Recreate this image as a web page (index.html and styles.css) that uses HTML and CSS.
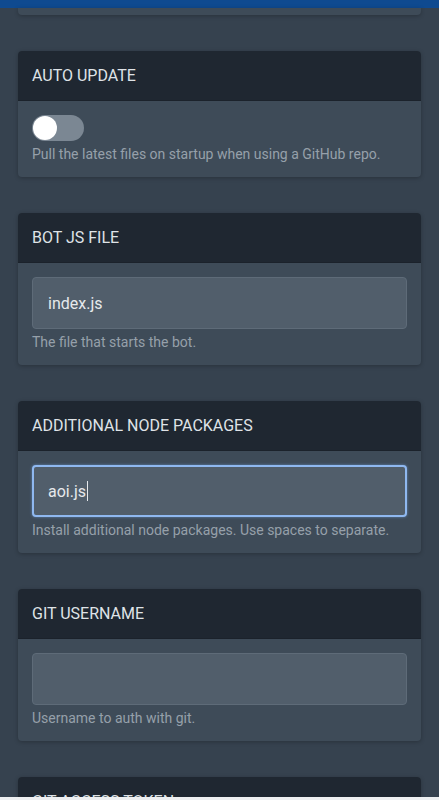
FILE: index.html
```html
<!DOCTYPE html>
<html>
<head>
<meta charset="utf-8">
<link rel="stylesheet" href="styles.css">
</head>
<body>
<div class="topbar"></div>
<main class="page">
  <div class="card-tail"></div>

  <section class="card">
    <header class="card-head">AUTO UPDATE</header>
    <div class="card-body">
      <div class="toggle"><span class="knob"></span></div>
      <p class="help">Pull the latest files on startup when using a GitHub repo.</p>
    </div>
  </section>

  <section class="card">
    <header class="card-head">BOT JS FILE</header>
    <div class="card-body">
      <div class="field">index.js</div>
      <p class="help">The file that starts the bot.</p>
    </div>
  </section>

  <section class="card">
    <header class="card-head">ADDITIONAL NODE PACKAGES</header>
    <div class="card-body">
      <div class="field focused">aoi.js<span class="caret"></span></div>
      <p class="help">Install additional node packages. Use spaces to separate.</p>
    </div>
  </section>

  <section class="card">
    <header class="card-head">GIT USERNAME</header>
    <div class="card-body">
      <div class="field"></div>
      <p class="help">Username to auth with git.</p>
    </div>
  </section>

  <section class="card">
    <header class="card-head">GIT ACCESS TOKEN</header>
    <div class="card-body">
      <div class="field"></div>
      <p class="help">Token to auth with git.</p>
    </div>
  </section>
</main>
<div class="bottom-edge"></div>
</body>
</html>
```

FILE: styles.css
```css
html, body {
  margin: 0;
  padding: 0;
  background: #36424f;
  font-family: Roboto, "Liberation Sans", sans-serif;
  overflow: hidden;
  height: 800px;
}

.topbar {
  height: 8px;
  background: #0f4a90;
}

.page {
  padding: 0 18px;
  display: flex;
  flex-direction: column;
  gap: 36px;
}

.card-tail {
  height: 7px;
  background: #3e4b58;
  border-radius: 0 0 4px 4px;
  box-shadow: 0 1px 4px rgba(0,0,0,0.25);
}

.card {
  border-radius: 4px;
  overflow: hidden;
  background: #3e4b58;
  box-shadow: 0 1px 4px rgba(0,0,0,0.25);
}

.card-head {
  height: 50px;
  box-sizing: border-box;
  padding: 0 14px;
  display: flex;
  align-items: center;
  background: #1f2731;
  color: #dfe3e7;
  font-size: 16px;
  border-bottom: 1px solid #1b222b;
}

.card-body {
  padding: 14px 14px 14px;
  display: flex;
  flex-direction: column;
}

.help {
  margin: 4px 0 0;
  font-size: 14px;
  line-height: 18px;
  color: #96a0aa;
}

.toggle {
  width: 52px;
  height: 26px;
  border-radius: 13px;
  background: #7b8793;
  position: relative;
}

.knob {
  position: absolute;
  left: 1px;
  top: 1px;
  width: 24px;
  height: 24px;
  border-radius: 50%;
  background: #ffffff;
}

.field {
  height: 52px;
  box-sizing: border-box;
  border: 1px solid #5e6b78;
  border-radius: 4px;
  background: #515e6b;
  padding: 0 15px;
  display: flex;
  align-items: center;
  color: #e6e9ec;
  font-size: 16px;
}

.field.focused {
  border: 2px solid #8fb8f0;
  padding: 0 14px;
  box-shadow: 0 0 3px rgba(120,170,240,0.6);
}

.caret {
  display: inline-block;
  width: 1px;
  height: 20px;
  background: #e6e9ec;
  margin-left: 1px;
}

.bottom-edge {
  position: fixed;
  left: 0;
  right: 0;
  bottom: 0;
  height: 3px;
  background: #eef0f2;
}
```
